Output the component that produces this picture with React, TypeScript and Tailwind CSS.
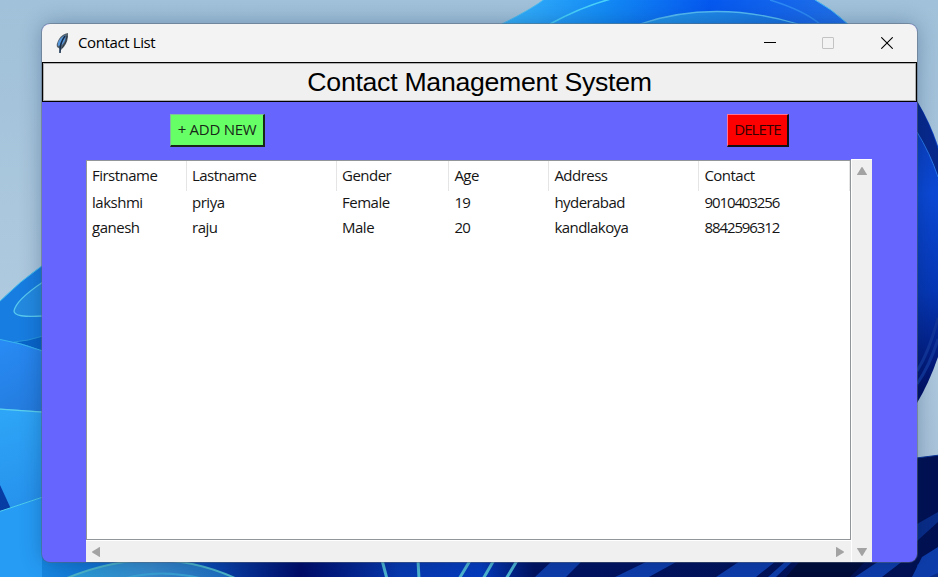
import React from "react";

const columns = [
  { title: "Firstname", width: "w-[100px]", valueTracking: "tracking-[-0.48px]", values: ["lakshmi", "ganesh"] },
  { title: "Lastname", width: "w-[150px]", valueTracking: "tracking-[-0.48px]", values: ["priya", "raju"] },
  { title: "Gender", width: "w-[112.4px]", valueTracking: "tracking-[-0.48px]", values: ["Female", "Male"] },
  { title: "Age", width: "w-[100px]", valueTracking: "tracking-[-0.8px]", values: ["19", "20"] },
  { title: "Address", width: "w-[150px]", valueTracking: "tracking-[-0.55px]", values: ["hyderabad", "kandlakoya"] },
  { title: "Contact", width: "w-[150.6px]", valueTracking: "tracking-[-1.08px]", values: ["9010403256", "8842596312"] },
];

function Wallpaper() {
  return (
    <svg className="absolute inset-0" width="938" height="577" viewBox="0 0 938 577" fill="none">
      <defs>
        <linearGradient id="sky" x1="0" y1="0" x2="0" y2="1">
          <stop offset="0" stopColor="#a0c1d9" /><stop offset=".55" stopColor="#afcadf" /><stop offset="1" stopColor="#a5bfd6" />
        </linearGradient>
        <linearGradient id="top" x1="500" y1="0" x2="850" y2="0" gradientUnits="userSpaceOnUse">
          <stop stopColor="#38b4fb" /><stop offset=".3" stopColor="#138bf5" /><stop offset=".6" stopColor="#0558ef" /><stop offset="1" stopColor="#2271e8" />
        </linearGradient>
        <linearGradient id="inner" x1="630" y1="0" x2="800" y2="0" gradientUnits="userSpaceOnUse">
          <stop stopColor="#249ced" /><stop offset="1" stopColor="#1770e2" />
        </linearGradient>
        <linearGradient id="leftLow" x1="0" y1="400" x2="42" y2="540" gradientUnits="userSpaceOnUse">
          <stop stopColor="#2fa8f8" /><stop offset="1" stopColor="#238ae8" />
        </linearGradient>
        <linearGradient id="leftMid" x1="0" y1="340" x2="42" y2="410" gradientUnits="userSpaceOnUse">
          <stop stopColor="#288bf5" /><stop offset="1" stopColor="#247bdc" />
        </linearGradient>
        <linearGradient id="right" x1="915" y1="110" x2="938" y2="390" gradientUnits="userSpaceOnUse">
          <stop stopColor="#0b3bb6" /><stop offset=".3" stopColor="#0b49d6" /><stop offset=".65" stopColor="#0637b5" /><stop offset="1" stopColor="#021065" />
        </linearGradient>
        <linearGradient id="bottom" x1="40" y1="0" x2="938" y2="0" gradientUnits="userSpaceOnUse">
          <stop stopColor="#1688e1" /><stop offset=".18" stopColor="#0b4eb8" /><stop offset=".29" stopColor="#000b68" /><stop offset=".4" stopColor="#0739b0" /><stop offset=".49" stopColor="#053cc0" /><stop offset=".55" stopColor="#011261" /><stop offset="1" stopColor="#021153" />
        </linearGradient>
        <linearGradient id="arch" x1="65" y1="0" x2="240" y2="0" gradientUnits="userSpaceOnUse">
          <stop stopColor="#269ed8" /><stop offset=".5" stopColor="#388acb" /><stop offset="1" stopColor="#1768bd" />
        </linearGradient>
      </defs>
      <path fill="url(#sky)" d="M0 0h938v577H0z" />
      <path fill="url(#top)" stroke="#49bdf2" d="M502 24Q532 9 546-2H812Q832 9 848 24z" />
      <path stroke="#49d2fa" strokeWidth="1.5" d="M550 24Q585 5 615-2" />
      <path stroke="#2d8af4" strokeWidth="1.5" d="M770 0Q803 10 820 24" />
      <path fill="url(#inner)" stroke="#55bbf3" strokeWidth="1.3" d="M640 24Q714-1 798 24" />
      <path fill="#177de0" stroke="#48c1eb" d="M-2 303Q20 281 43 265V580H-2z" />
      <path fill="#238ae0" stroke="#58c9ef" strokeWidth="1.3" d="M43 282Q16 300 14 311Q14 318 43 316" />
      <path fill="#0865c9" stroke="#2796dc" d="M14 342Q28 341 43 336V352Q28 345 14 342z" />
      <path fill="url(#leftMid)" stroke="#38b4ef" d="M-2 339Q21 343 43 351V412L-2 409z" />
      <path fill="url(#leftLow)" stroke="#5bd0ee" strokeWidth="1.3" d="M-2 409L43 412V580H-2z" />
      <path fill="#073ca5" d="M0 485L11 509 0 511z" />
      <path fill="#269cf5" stroke="#4dcdec" d="M-2 512L43 497V580H-2z" />
      <path fill="url(#right)" d="M917 101Q930 122 938 146V357Q929 383 917 403z" />
      <path fill="#08298d" d="M917 101Q930 124 938 149V177Q930 153 917 132z" />
      <path stroke="#2877e7" d="M917 132Q930 153 938 177" />
      <path stroke="#103499" strokeWidth="3" d="M938 318Q929 352 917 371M938 339Q930 365 917 384" />
      <path fill="#001052" stroke="#0c3699" d="M900 460L940 455V580h-40z" />
      <path fill="#092c88" d="M917 524L938 512V522L917 541zM917 565L938 548V577h-21z" />
      <path fill="url(#bottom)" d="M42 555h869v22H42z" />
      <path fill="url(#arch)" stroke="#4db6c9" strokeWidth="2" d="M67 578Q155 542 235 578" />
      <path stroke="#39a1d4" strokeWidth="2" d="M126 578Q160 569 200 578" />
      <path stroke="#4eb6d2" strokeWidth="3" d="M382 560L387 579M418 560L419 579M471 559L459 579M494 560L483 579M518 559L506 579" />
      <path fill="#0e3dab" d="M552 561H582L566 577H535zM648 561H678L649 577H615zM740 561H776L756 577H716zM786 561H793L776 577H768zM885 557H908L882 577H855zM922 557L938 547V573L929 577H912z" />
      <path fill="#010b38" d="M800 561H866L850 577H786z" />
    </svg>
  );
}

function Feather() {
  return (
    <svg className="h-5 w-3" viewBox="0 0 12 20">
      <path fill="#53616d" d="M4 20V16L1 14Q0 11 3 6Q6 1 12 0V4Q11 12 5 17z" />
      <path fill="#5798dc" d="M2 13Q1 9 5 5L9 2Q11 6 6 12z" />
      <path stroke="#142c4a" strokeWidth="1.5" fill="none" d="M4 20V17Q4 10 9 3" />
      <path stroke="#252e38" fill="none" strokeWidth=".8" d="M6 15Q11 9 11 3" />
    </svg>
  );
}

function Arrow({ direction }: { direction: "up" | "down" | "left" | "right" }) {
  const paths = {
    up: "M1 9Q1 8 2 7L5 2Q6 0 7 2L10 7Q11 8 11 9z",
    down: "M1 1H11Q11 2 10 3L7 8Q6 10 5 8L2 3Q1 2 1 1z",
    left: "M9 0V10Q8 10 7 9L2 6Q0 5 2 4L7 1Q8 0 9 0z",
    right: "M1 0Q2 0 3 1L8 4Q10 5 8 6L3 9Q2 10 1 10z",
  };
  return <svg className="h-[10px] w-3 shrink-0" viewBox="0 0 12 10"><path fill="#a3a3a3" d={paths[direction]} /></svg>;
}

function TitleBar() {
  return (
    <header className="flex h-[38px] items-center bg-[#f3f3f3] pl-[14px]">
      <Feather />
      <h1 className="ml-[10px] pb-0.5 text-[15px] leading-[18px] tracking-[-0.38px]">Contact List</h1>
      <div className="ml-auto flex items-center gap-[46px] pr-6">
        <svg className="-ml-px h-3 w-3" viewBox="0 0 12 12"><path stroke="#000" d="M0 5.5H12" /></svg>
        <svg className="mr-px h-3 w-3" viewBox="0 0 12 12" fill="none"><rect x=".5" y=".5" width="11" height="11" stroke="#c3c3c3" rx=".5" /></svg>
        <svg className="h-3 w-3" viewBox="0 0 12 12"><path stroke="#000" strokeWidth="1.1" d="M.3.3l11.4 11.4m0-11.4L.3 11.7" /></svg>
      </div>
    </header>
  );
}

export default function App() {
  return (
    <main className="relative flex h-[577px] w-[938px] overflow-hidden bg-[#abc8dd] pt-6 pl-[42px] font-['Open_Sans',sans-serif] text-black">
      <Wallpaper />
      <section className="relative h-[538px] w-[875px] overflow-hidden rounded-[8px] bg-[#6666ff] shadow-[0_0_0_1px_#59657680,0_0_22px_#00205055]">
        <TitleBar />
        <div className="flex h-10 items-center justify-center border border-black bg-[#f0f0f0] font-['Liberation_Sans',sans-serif] text-[26.7px] leading-[38px] tracking-[-0.29px] shadow-[inset_0_0_0_1px_#b0b0b0]">Contact Management System</div>
        <div className="flex h-[57px] items-start justify-between pt-3 pr-[128px] pl-32">
          <button className="flex h-[33px] w-[95px] justify-center border border-t-[#80bda0] border-r-2 border-b-2 border-l-[#80bda0] border-r-[#182818] border-b-[#182818] bg-[#66ff66] text-[15px] leading-[28px] tracking-[-0.28px] whitespace-nowrap text-[#182818]">+ ADD NEW</button>
          <button className="flex h-[33px] w-[62px] justify-center border border-t-[#ff7595] border-r-2 border-b-2 border-l-[#ff7595] border-r-[#111] border-b-[#111] bg-[#ff0000] text-[15px] leading-[28px] tracking-[-0.9px] text-[#350000]">DELETE</button>
        </div>
        <div className="ml-11 flex h-[403px] w-[786px] bg-[#f0f0f0]">
          <div className="w-[765px] bg-[#6666ff] pt-px">
            <div className="flex h-[380px] border border-[#929699] bg-white">
              {columns.map((column) => (
                <div className={`${column.width} shrink-0 text-[15px] text-[#151515]`} key={column.title}>
                  <div className="h-[30px] border-r border-[#e5e5e5] pl-[5px] leading-[28px] tracking-[-0.52px]">{column.title}</div>
                  {column.values.map((value) => <div className={`h-[25px] pl-[5px] leading-[23px] ${column.valueTracking}`} key={value}>{value}</div>)}
                </div>
              ))}
            </div>
            <div className="flex h-[22px] items-center justify-between border-t border-white bg-[#f0f0f0] pr-1 pl-[5px]"><Arrow direction="left" /><Arrow direction="right" /></div>
          </div>
          <div className="flex w-[21px] flex-col items-center justify-between border-t border-l border-white pt-1.5 pb-[5px]"><Arrow direction="up" /><Arrow direction="down" /></div>
        </div>
      </section>
    </main>
  );
}
